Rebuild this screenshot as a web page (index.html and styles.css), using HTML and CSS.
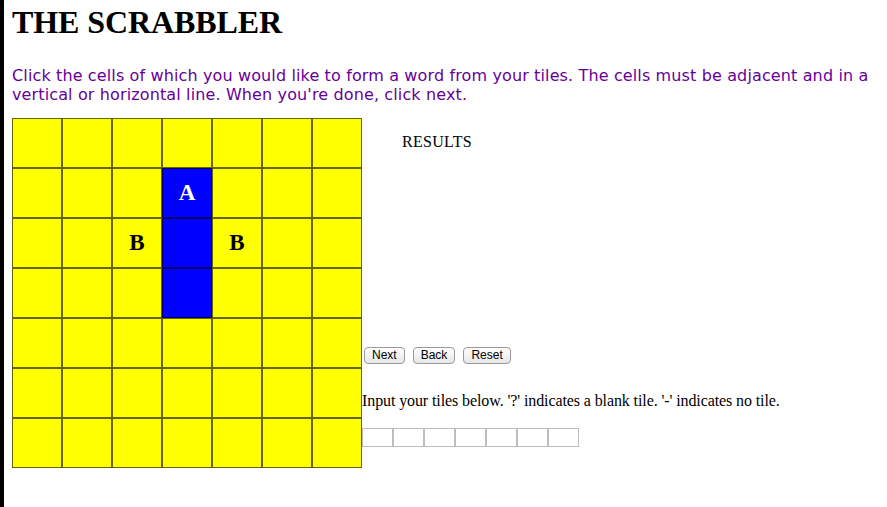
FILE: index.html
```
<!DOCTYPE html>
<html>
<head>
<meta charset="utf-8">
<link rel="stylesheet" href="styles.css">
</head>
<body>
<div class="page">
  <h1 class="title">THE SCRABBLER</h1>
  <p class="intro">Click the cells of which you would like to form a word from your tiles. The cells must be adjacent and in a vertical or horizontal line. When you're done, click next.</p>
  <div class="main">
    <div class="board">
      <div class="cell"></div><div class="cell"></div><div class="cell"></div><div class="cell"></div><div class="cell"></div><div class="cell"></div><div class="cell"></div>
      <div class="cell"></div><div class="cell"></div><div class="cell"></div><div class="cell sel">A</div><div class="cell"></div><div class="cell"></div><div class="cell"></div>
      <div class="cell"></div><div class="cell"></div><div class="cell">B</div><div class="cell sel"></div><div class="cell">B</div><div class="cell"></div><div class="cell"></div>
      <div class="cell"></div><div class="cell"></div><div class="cell"></div><div class="cell sel"></div><div class="cell"></div><div class="cell"></div><div class="cell"></div>
      <div class="cell"></div><div class="cell"></div><div class="cell"></div><div class="cell"></div><div class="cell"></div><div class="cell"></div><div class="cell"></div>
      <div class="cell"></div><div class="cell"></div><div class="cell"></div><div class="cell"></div><div class="cell"></div><div class="cell"></div><div class="cell"></div>
      <div class="cell"></div><div class="cell"></div><div class="cell"></div><div class="cell"></div><div class="cell"></div><div class="cell"></div><div class="cell"></div>
    </div>
    <div class="side">
      <div class="results">RESULTS</div>
      <div class="buttons">
        <button class="btn">Next</button>
        <button class="btn">Back</button>
        <button class="btn">Reset</button>
      </div>
      <div class="instr">Input your tiles below. '?' indicates a blank tile. '-' indicates no tile.</div>
      <div class="tiles">
        <input class="tile" type="text"><input class="tile" type="text"><input class="tile" type="text"><input class="tile" type="text"><input class="tile" type="text"><input class="tile" type="text"><input class="tile" type="text">
      </div>
    </div>
  </div>
</div>
</body>
</html>
```
FILE: styles.css
```
html, body {
  margin: 0;
  padding: 0;
  background: #fff;
}
body {
  border-left: 4px solid #000;
  min-height: 507px;
  box-sizing: border-box;
  font-family: "Liberation Serif", "Times New Roman", serif;
}
.page {
  padding: 5px 0 0 8px;
}
.title {
  margin: 0;
  font-family: "Liberation Serif", serif;
  font-size: 32px;
  font-weight: bold;
  line-height: 35px;
  letter-spacing: -0.1px;
  color: #000;
}
.intro {
  margin: 26px 0 14px 0;
  font-family: "DejaVu Sans", Verdana, sans-serif;
  font-size: 16px;
  line-height: 19px;
  letter-spacing: 0.13px;
  color: #660099;
}
.main {
  display: flex;
  align-items: flex-start;
}
.board {
  display: grid;
  grid-template-columns: repeat(7, 50px);
  grid-template-rows: repeat(7, 50px);
}
.cell {
  box-sizing: border-box;
  border: 1px solid rgba(0, 0, 0, 0.6);
  background: #ffff00;
  display: flex;
  align-items: center;
  justify-content: center;
  font-family: "Liberation Serif", serif;
  font-weight: bold;
  font-size: 23px;
  color: #000;
}
.cell.sel {
  background: #0000ff;
  color: #fff;
}
.side {
  display: flex;
  flex-direction: column;
  font-size: 16px;
}
.results {
  height: 214px;
  padding: 15px 0 0 40px;
  line-height: 18px;
  letter-spacing: 0.3px;
}
.buttons {
  display: flex;
  gap: 8px;
  margin-left: 2px;
}
.btn {
  height: 17px;
  padding: 0 7px;
  margin: 0;
  font-family: "Liberation Sans", Arial, sans-serif;
  font-size: 12px;
  line-height: 15px;
  color: #000;
  background: linear-gradient(#ffffff, #e6e6e6);
  border: 1px solid #9a9a9a;
  border-radius: 4px;
}
.instr {
  margin-top: 28px;
  line-height: 18px;
  letter-spacing: -0.1px;
}
.tiles {
  display: flex;
  margin-top: 18px;
}
.tile {
  box-sizing: border-box;
  width: 31px;
  height: 19px;
  margin: 0;
  padding: 0;
  border: 1px solid #bdbdbd;
  background: #fff;
}
```
